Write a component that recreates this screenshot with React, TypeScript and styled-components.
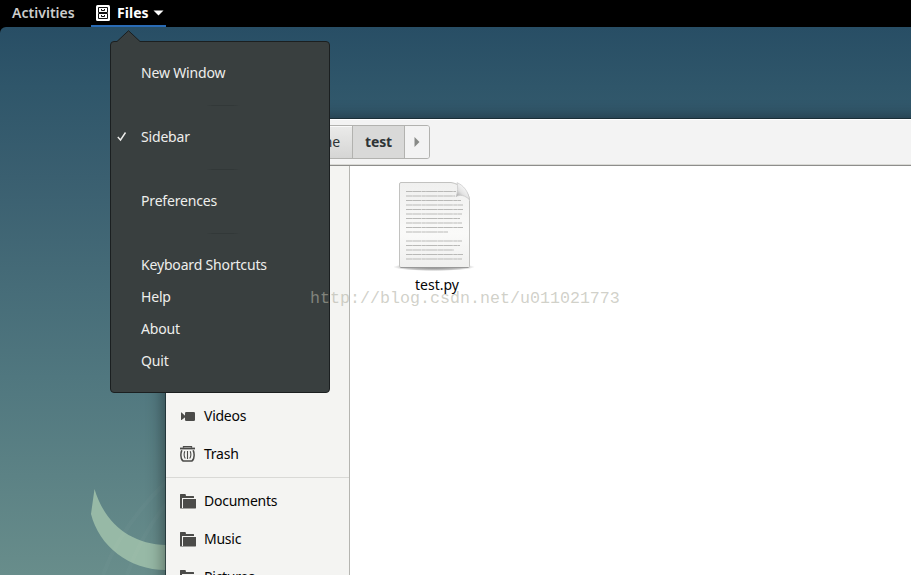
import React from "react";
import styled, { createGlobalStyle, css } from "styled-components";

const Global = createGlobalStyle`
  * { box-sizing: border-box; }
  body { margin: 0; overflow: hidden; background: #000; }
`;

const Screen = styled.div`
  position: relative;
  display: flex;
  flex-direction: column;
  width: 911px;
  height: 575px;
  overflow: hidden;
  background: #000;
  font-family: "Noto Sans", "Open Sans", sans-serif;
  font-size: 14px;
  line-height: 20px;
  letter-spacing: -0.17px;
  white-space: nowrap;
`;

const TopBar = styled.header`
  display: flex;
  flex: none;
  height: 27px;
  padding-left: 12px;
  color: #ccc;
  font-weight: 600;
  letter-spacing: 0.03px;
`;

const Activities = styled.span`
  width: 79px;
  padding-top: 3px;
`;

const AppButton = styled.div`
  display: flex;
  align-items: center;
  width: 75px;
  height: 27px;
  padding: 1px 3px 0 5px;
  border-bottom: 2px solid #2a6bb5;
  color: #fff;
  font-weight: 700;
  svg { flex: none; }
`;

const AppName = styled.span`
  width: 32px;
  margin: 0 4px 0 7px;
`;

const Desktop = styled.main`
  position: relative;
  flex: 1;
  padding: 92px 0 0 166px;
  overflow: hidden;
  border-top-left-radius: 6px;
  background: linear-gradient(#284e65 0, #2f566a 60px, #3a5f70 150px, #50777f 350px, #688d8b 548px);
`;

const Wallpaper = styled.svg`
  position: absolute;
  left: 0;
  top: 0;
`;

const Window = styled.section`
  position: relative;
  display: flex;
  flex-direction: column;
  width: 760px;
  height: 470px;
  background: #fff;
  box-shadow: 0 0 0 1px rgba(20, 35, 40, 0.65), 0 2px 16px 2px rgba(0, 0, 0, 0.45);
`;

const HeaderBar = styled.div`
  flex: none;
  height: 47px;
  padding: 5px 0 0 120px;
  border-top: 1px solid #fff;
  border-bottom: 1px solid #8d8d8b;
  background: #f3f3f3;
  box-shadow: inset 0 -1px #d9d9d5;
`;

const PathBar = styled.div`
  display: flex;
  width: 144px;
  height: 34px;
  border: 1px solid #b2b2af;
  border-radius: 3px;
  overflow: hidden;
`;

const Crumb = styled.div<{ $w: number; $active?: boolean; $plain?: boolean }>`
  display: flex;
  align-items: center;
  justify-content: center;
  flex: none;
  width: ${(p) => p.$w}px;
  color: #2e3436;
  ${(p) =>
    p.$active
      ? css`background: #d9d9d8; font-weight: 700; border-right: 1px solid #b2b2af;`
      : p.$plain
        ? css`background: #f3f3f3;`
        : css`
            justify-content: flex-end;
            padding-right: 12px;
            background: linear-gradient(#ebebea, #d5d5d4);
            border-right: 1px solid #b2b2af;
            box-shadow: inset 0 1px #fafafa;
          `}
`;

const Body = styled.div`
  display: flex;
  flex: 1;
  min-height: 0;
`;

const Sidebar = styled.nav`
  flex: none;
  width: 184px;
  padding-top: 231px;
  overflow: hidden;
  border-right: 1px solid #b5b5b1;
  background: #f4f4f2;
  color: #050505;
  letter-spacing: -0.25px;
`;

const Place = styled.div`
  display: flex;
  align-items: center;
  gap: 8px;
  height: 38px;
  padding-left: 14px;
  svg { display: block; flex: none; }
`;

const PlaceDivider = styled.div`
  height: 1px;
  margin: 4px 0;
  background: #d9d9d6;
`;

const FileArea = styled.div`
  flex: 1;
  padding: 9px 0 0 37px;
`;

const FileItem = styled.div`
  display: flex;
  flex-direction: column;
  align-items: center;
  width: 100px;
  color: #050505;
  svg { display: block; margin-right: 6px; }
`;

const FileName = styled.span`
  margin-top: 2px;
  letter-spacing: 0;
`;

const MenuPopup = styled.div`
  position: absolute;
  left: 110px;
  top: 41px;
  width: 220px;
  height: 352px;
  padding: 15px 0;
  border: 1px solid #1b1f20;
  border-radius: 4px;
  background: #393f3f;
  color: #eeeeec;
`;

const Pointer = styled.svg`
  position: absolute;
  left: 5px;
  top: -12px;
`;

const MenuItem = styled.div`
  display: flex;
  align-items: center;
  height: 32px;
`;

const CheckSlot = styled.span`
  display: flex;
  width: 30px;
  padding-left: 6px;
`;

const MenuDivider = styled.div`
  width: 34px;
  height: 1px;
  margin: 16px auto 15px 95px;
  background: linear-gradient(90deg, #393f3f, #323838 20%, #323838 80%, #393f3f);
`;

const Watermark = styled.div`
  position: absolute;
  left: 310px;
  top: 288px;
  color: rgba(178, 178, 165, 0.6);
  font: 16.67px/22px "Liberation Mono", monospace;
  letter-spacing: 0;
`;

const FilesIcon = () => (
  <svg width="14" height="16" viewBox="0 0 14 16">
    <rect width="14" height="16" rx="1.5" fill="#fff" />
    <path d="M2.5 2.5h9v5h-9zM2.5 8.5h9v5h-9z" fill="none" stroke="#111" />
    <path d="M5.5 4v1.5h3V4M5.5 10v1.5h3V10" fill="none" stroke="#111" />
  </svg>
);

const VideoIcon = () => (
  <svg width="16" height="16" fill="#4b4b49">
    <path d="M1 4.5h.6L4.5 7.3v2.4L1.6 12H1z" />
    <rect x="5" y="4" width="10" height="9" rx="1.3" />
    <path d="M4 7.5h2v2H4z" />
  </svg>
);

const TrashIcon = () => (
  <svg width="16" height="16" fill="none" stroke="#4b4b49">
    <path d="M3.5 1.8V.7h8v1.1" strokeWidth="1.3" />
    <path d="M0 2.5h15" strokeWidth="1.8" />
    <path d="M1.8 4.3C.5 7.5.8 12 2.3 14.2l.8.8h8.8l.8-.8c1.5-2.2 1.8-6.7.5-9.9" strokeWidth="1.7" />
    <path d="M4.8 5.3c-1 2.5-.8 5.2.5 7.2M7.5 5v8M10.2 5.3c1 2.5.8 5.2-.5 7.2" strokeWidth="1.1" />
  </svg>
);

const FolderIcon = () => (
  <svg width="16" height="16" fill="#4b4b49">
    <path d="M0 1.5C0 1.2.2 1 .5 1h5l.5 2h7.500c.3 0 .5.2.5.5V5H2v10.500H.5c-.3 0-.5-.2-.5-.5z" />
    <path d="M3 6.500C3 6.200 3.200 6 3.500 6H16v9c0 .3-.2.500-.5.500H2V15h1z" />
  </svg>
);

const textRows = [50, 49, 55, 57, 57, 56, 54, 56, 57, 42, 0, 56, 54, 48, 57, 56];

const DocumentIcon = () => (
  <svg width="84" height="98" viewBox="0 0 84 98">
    <defs>
      <linearGradient id="paper" x1="0" y1="0" x2="0" y2="1">
        <stop offset="0" stopColor="#f0f0ef" />
        <stop offset=".6" stopColor="#fafaf9" />
        <stop offset="1" stopColor="#efefee" />
      </linearGradient>
      <linearGradient id="fold" x1="0" y1="1" x2=".7" y2="0.1">
        <stop offset="0" stopColor="#888" />
        <stop offset=".5" stopColor="#e2e2e2" />
        <stop offset="1" stopColor="#fff" />
      </linearGradient>
      <radialGradient id="ground">
        <stop offset="0" stopColor="#555" stopOpacity=".8" />
        <stop offset=".75" stopColor="#555" stopOpacity=".35" />
        <stop offset="1" stopColor="#555" stopOpacity="0" />
      </radialGradient>
    </defs>
    <ellipse cx="42" cy="92" rx="41" ry="4" fill="url(#ground)" />
    <path d="M9 7.500h50c8 1 18.500 9 18.500 18v66q0 1-1 1H9q-1.500 0-1.500-1.500V9q0-1.500 1.500-1.500z" fill="url(#paper)" stroke="#c2c2c0" />
    <path d="M8.500 92.500h68" stroke="#999" />
    <g stroke="#b9b9b7" strokeWidth="1.100" strokeDasharray="6 .3 9 .5 4 .3 11 .4">
      {textRows.map((w, i) => (w ? <path key={i} d={`M14 ${16.500 + i * 4.500}h${w}`} /> : null))}
    </g>
    <path d="M65 7.700c1 3.500 1 9.500-1 14 4-2.500 9-1.500 13.500 3-1-8-6-14.500-12.500-17z" fill="url(#fold)" stroke="#c4c4c4" strokeWidth=".7" />
  </svg>
);

const menuGroups: string[][] = [
  ["New Window"],
  ["Sidebar"],
  ["Preferences"],
  ["Keyboard Shortcuts", "Help", "About", "Quit"],
];

export default function App() {
  return (
    <>
      <Global />
      <Screen>
        <TopBar>
          <Activities>Activities</Activities>
          <AppButton>
            <FilesIcon />
            <AppName>Files</AppName>
            <svg width="11" height="6"><path d="M.5 .5h10L5.500 5.500z" fill="#fff" /></svg>
          </AppButton>
        </TopBar>
        <Desktop>
          <Wallpaper width="911" height="548">
            <path d="M94.500 462C105 497 131 517 166 518v25C129 543 99 519 91 487z" fill="#97b9a6" />
            <path d="M103 548Q120 500 166 455M127 548Q140 510 166 477" stroke="#fff" strokeOpacity=".02" strokeWidth="4" fill="none" />
          </Wallpaper>
          <Window>
            <HeaderBar>
              <PathBar>
                <Crumb $w={66}>Home</Crumb>
                <Crumb $w={52} $active>test</Crumb>
                <Crumb $w={24} $plain>
                  <svg width="6" height="10"><path d="M.5 0 5.500 5 .5 10z" fill="#888a87" /></svg>
                </Crumb>
              </PathBar>
            </HeaderBar>
            <Body>
              <Sidebar>
                <Place><VideoIcon />Videos</Place>
                <Place><TrashIcon />Trash</Place>
                <PlaceDivider />
                <Place><FolderIcon />Documents</Place>
                <Place><FolderIcon />Music</Place>
                <Place><FolderIcon />Pictures</Place>
              </Sidebar>
              <FileArea>
                <FileItem>
                  <DocumentIcon />
                  <FileName>test.py</FileName>
                </FileItem>
              </FileArea>
            </Body>
          </Window>
        </Desktop>
        <MenuPopup>
          <Pointer width="26" height="13">
            <path d="M0 13V12L12.500 .7 25 12v1z" fill="#393f3f" />
            <path d="M0 11.500h1L12.500 .7 24 11.500h1" fill="none" stroke="#1b1f20" />
          </Pointer>
          {menuGroups.map((group, i) => (
            <React.Fragment key={i}>
              {i > 0 && <MenuDivider />}
              {group.map((label) => (
                <MenuItem key={label}>
                  <CheckSlot>
                    {label === "Sidebar" && (
                      <svg width="10" height="10"><path d="M.8 5 3.500 8 8.500.5" fill="none" stroke="#eeeeec" strokeWidth="1.400" /></svg>
                    )}
                  </CheckSlot>
                  {label}
                </MenuItem>
              ))}
            </React.Fragment>
          ))}
        </MenuPopup>
        <Watermark>http://blog.csdn.net/u011021773</Watermark>
      </Screen>
    </>
  );
}
